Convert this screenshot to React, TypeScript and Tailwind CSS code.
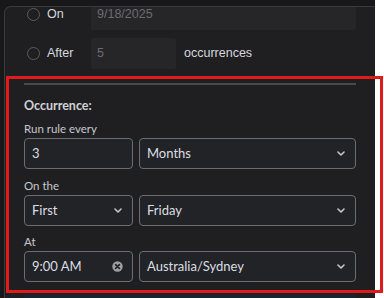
import React from "react";

const sans = "font-['Liberation_Sans',Arial,sans-serif]";
const ui = "font-['Lato','Noto_Sans',sans-serif]";

function Radio() {
  return <span className="block w-[13px] h-[13px] rounded-full border-[1.5px] border-[#5c5c60] shrink-0" />;
}

function Chevron() {
  return (
    <svg width="8" height="5" viewBox="0 0 8 5" className="shrink-0 mr-[1px]">
      <path d="M1 1 L4 4 L7 1" fill="none" stroke="#c4c6ca" strokeWidth="1.6" strokeLinecap="round" strokeLinejoin="round" />
    </svg>
  );
}

function ClearIcon() {
  return (
    <svg width="11" height="11" viewBox="0 0 11 11" className="shrink-0">
      <circle cx="5.5" cy="5.5" r="5.2" fill="#9c9ea2" />
      <path d="M3.6 3.6 L7.4 7.4 M7.4 3.6 L3.6 7.4" stroke="#222327" strokeWidth="1.6" strokeLinecap="round" />
    </svg>
  );
}

function Field({ value, select, clear }: { value: string; select?: boolean; clear?: boolean }) {
  return (
    <div className="flex items-center h-[31px] rounded-[4px] border border-[#6c6d71] bg-[#222327] pl-[7px] pr-[9px]">
      <span className="flex-1 text-[13px] text-[#dcdee2] truncate">{value}</span>
      {select && <Chevron />}
      {clear && <ClearIcon />}
    </div>
  );
}

function Label({ children, className = "" }: { children: React.ReactNode; className?: string }) {
  return <div className={`h-[14px] leading-[14px] text-[11.5px] text-[#c6c9ce] ${className}`}>{children}</div>;
}

export default function App() {
  return (
    <div className="relative flex w-[384px] h-[298px] bg-white overflow-hidden">
      <div className="w-[375px] h-full bg-[#18181a] pt-[6px] pl-[4px]">
        <div className="h-full rounded-tl-[7px] border-l border-t border-[#3b3b3f] bg-[#1f1f22] overflow-hidden">
          <div className="-mt-[8px]">
            {/* end options */}
            <div className={`flex items-center h-[31px] pl-[22px] ${sans}`}>
              <div className="flex items-center gap-[7px] w-[64px]">
                <Radio />
                <span className="text-[12.5px] text-[#d6d8dc]">On</span>
              </div>
              <div className="flex items-center w-[265px] h-[31px] rounded-[2px] bg-[#262629] px-[6px] text-[12.5px] text-[#6b6c70]">
                9/18/2025
              </div>
            </div>
            <div className={`flex items-center h-[31px] mt-[8px] pl-[22px] ${sans}`}>
              <div className="flex items-center gap-[7px] w-[64px]">
                <Radio />
                <span className="text-[12.5px] text-[#d6d8dc]">After</span>
              </div>
              <div className="flex items-center w-[85px] h-[31px] rounded-[2px] bg-[#262629] px-[6px] text-[12.5px] text-[#6b6c70]">
                5
              </div>
              <span className="ml-[8px] text-[12.5px] text-[#d6d8dc]">occurrences</span>
            </div>

            {/* occurrence */}
            <div className={`pl-[19px] ${ui}`}>
              <div className="mt-[14px] w-[332px] h-[2px] bg-[#4a4a4e]" />
              <div className="mt-[13px] h-[16px] leading-[16px] text-[12.5px] font-bold text-[#cfd2d7]">Occurrence:</div>
              <Label className="mt-[8px]">Run rule every</Label>
              <div className="mt-[2px] grid grid-cols-[109px_217px] gap-[6px]">
                <Field value="3" />
                <Field value="Months" select />
              </div>
              <Label className="mt-[10px]">On the</Label>
              <div className="mt-[2px] grid grid-cols-[109px_217px] gap-[6px]">
                <Field value="First" select />
                <Field value="Friday" select />
              </div>
              <Label className="mt-[9px]">At</Label>
              <div className="mt-[2px] grid grid-cols-[109px_217px] gap-[6px]">
                <Field value="9:00 AM" clear />
                <Field value="Australia/Sydney" select />
              </div>
              <div className="mt-[12px] w-[332px] h-[10px] rounded-t-[3px] bg-[#1b2231]" />
            </div>
          </div>
        </div>
      </div>
      <div className="flex-1" />

      {/* highlight annotation */}
      <div className="absolute left-[6px] top-[76px] w-[377px] h-[217px] border-[3px] border-[#e01b1b]" />
    </div>
  );
}
